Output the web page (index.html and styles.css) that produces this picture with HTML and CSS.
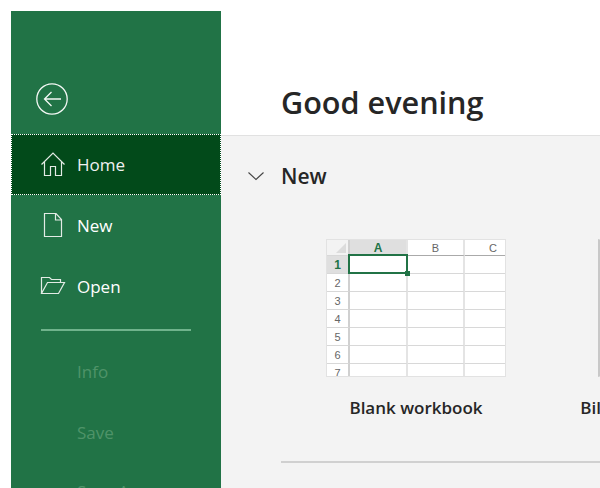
FILE: index.html
```html
<!DOCTYPE html>
<html lang="en">
<head>
  <meta charset="UTF-8">
  <title>Excel - Home</title>
  <meta name="viewport" content="width=device-width, initial-scale=1.0">
  <link rel="stylesheet" href="styles.css">
</head>
<body>

  <nav class="sidebar">
    <div class="back-row">
      <svg class="back-icon" width="34" height="34" viewBox="0 0 34 34" fill="none" stroke="#f4f8f5" stroke-width="1.3">
        <circle cx="17" cy="17" r="15.2"/>
        <path d="M9.5 17H26M16.5 10L9.5 17L16.5 24"/>
      </svg>
    </div>

    <a class="nav-item active">
      <svg class="nav-icon" width="26" height="26" viewBox="0 0 26 26" fill="none" stroke="#e3ebe5" stroke-width="1.2">
        <path d="M1.5 13.5L13 2L24.5 13.5M4.5 11V24.5H10.5V15.5H15.5V24.5H21.5V11"/>
      </svg>
      Home
    </a>
    <a class="nav-item">
      <svg class="nav-icon" width="26" height="26" viewBox="0 0 26 26" fill="none" stroke="#e3ebe5" stroke-width="1.2">
        <path d="M4.5 1.5H16L21.5 7.5V24.5H4.5ZM15.5 1.5V8H21.5"/>
      </svg>
      New
    </a>
    <a class="nav-item">
      <svg class="nav-icon" width="26" height="26" viewBox="0 0 26 26" fill="none" stroke="#e3ebe5" stroke-width="1.2">
        <path d="M1.5 20.5V4.5H9.5L11.5 6.5H20.5V9.5M1.5 20.5H18.5L24.5 9.5H7.5L1.5 20.5Z"/>
      </svg>
      Open
    </a>

    <div class="nav-divider"></div>

    <a class="nav-item disabled">Info</a>
    <a class="nav-item disabled">Save</a>
    <a class="nav-item disabled">Save As</a>
  </nav>

  <main class="content">
    <header class="greeting">
      <h1>Good evening</h1>
    </header>

    <section class="new-section">
      <div class="section-title">
        <svg class="chevron" width="18" height="10" viewBox="0 0 18 10" fill="none" stroke="#444" stroke-width="1.1">
          <path d="M1.5 1.5L9 8.5L16.5 1.5"/>
        </svg>
        <h2>New</h2>
      </div>

      <div class="templates">
        <div class="template">
          <div class="sheet">
            <div class="cell corner"><span class="corner-mark"></span></div>
            <div class="cell col-head selected">A</div>
            <div class="cell col-head">B</div>
            <div class="cell col-head col-c">C</div>

            <div class="cell row-head selected">1</div>
            <div class="cell active-cell"><span class="fill-handle"></span></div>
            <div class="cell"></div>
            <div class="cell"></div>

            <div class="cell row-head">2</div>
            <div class="cell"></div>
            <div class="cell"></div>
            <div class="cell"></div>

            <div class="cell row-head">3</div>
            <div class="cell"></div>
            <div class="cell"></div>
            <div class="cell"></div>

            <div class="cell row-head">4</div>
            <div class="cell"></div>
            <div class="cell"></div>
            <div class="cell"></div>

            <div class="cell row-head">5</div>
            <div class="cell"></div>
            <div class="cell"></div>
            <div class="cell"></div>

            <div class="cell row-head">6</div>
            <div class="cell"></div>
            <div class="cell"></div>
            <div class="cell"></div>

            <div class="cell row-head">7</div>
            <div class="cell"></div>
            <div class="cell"></div>
            <div class="cell"></div>
          </div>
          <p class="template-name">Blank workbook</p>
        </div>

        <div class="template">
          <div class="sheet sheet-next"></div>
          <p class="template-name">Billing Statement Trackers</p>
        </div>
      </div>

      <div class="section-rule"></div>
    </section>
  </main>

</body>
</html>
```

FILE: styles.css
```css
* {
  box-sizing: border-box;
}

html, body {
  height: 488px;
  overflow: hidden;
}

body {
  margin: 0;
  padding: 11px 0 0 11px;
  display: flex;
  background-color: #fff;
  font-family: "Open Sans", sans-serif;
  color: #262626;
}

.sidebar {
  width: 210px;
  flex-shrink: 0;
  height: 477px;
  overflow: hidden;
  background-color: #217346;
}

.back-row {
  height: 123px;
  padding: 71px 0 0 24px;
}

.back-icon {
  display: block;
}

.nav-item {
  display: flex;
  align-items: center;
  height: 61px;
  padding-left: 66px;
  position: relative;
  font-size: 17px;
  color: #fff;
}

.nav-item.active {
  background-color: #024a1a;
  color: #f0f0f0;
  outline: 1px dotted #fff;
  outline-offset: -1px;
}

.nav-icon {
  position: absolute;
  left: 29px;
  top: 17px;
}

.nav-divider {
  height: 2px;
  margin: 12px 30px 10px;
  background-color: #70b38c;
}

.nav-item.disabled {
  color: #4f9369;
}

.nav-item.disabled:last-child {
  margin-top: -2px;
}

.content {
  flex: 1;
  min-width: 0;
  overflow: hidden;
}

.greeting {
  height: 125px;
  padding: 72px 0 0 60px;
  border-bottom: 1px solid #e1e1e1;
}

h1 {
  margin: 0;
  font-size: 30.6px;
  line-height: 38px;
  font-weight: 600;
  color: #262626;
}

.new-section {
  height: 352px;
  background-color: #f3f3f3;
  padding: 0 0 0 60px;
}

.section-title {
  display: flex;
  align-items: center;
  height: 79px;
  position: relative;
}

.chevron {
  position: absolute;
  left: -34px;
  top: 35px;
}

h2 {
  margin: 0;
  font-size: 21px;
  font-weight: 600;
  color: #262626;
}

.templates {
  display: flex;
  gap: 92px;
  padding-left: 45px;
  margin-top: 24px;
}

.template {
  width: 180px;
  flex-shrink: 0;
  display: flex;
  flex-direction: column;
  align-items: center;
}

.sheet {
  width: 180px;
  height: 138px;
  display: grid;
  grid-template-columns: 23px 58px 57px 42px;
  grid-template-rows: 16px repeat(7, 18px);
  overflow: hidden;
  background-color: #fff;
  border: 1px solid #e2e2e2;
  font-family: "Liberation Sans", sans-serif;
  font-size: 11px;
  color: #666;
}

.sheet-next {
  display: block;
  border-left: 2px solid #c8c8c8;
}

.cell {
  position: relative;
  display: flex;
  align-items: center;
  justify-content: center;
  border-right: 2px solid #e4e4e4;
  border-bottom: 1px solid #d8d8d8;
}

.corner {
  background-color: #f3f3f3;
  border-right: 2px solid #d0d0d0;
}

.corner-mark {
  position: absolute;
  right: 2px;
  bottom: 2px;
  border-style: solid;
  border-width: 0 0 10px 10px;
  border-color: transparent transparent #dcdcdc transparent;
}

.col-head {
  border-bottom: 1px solid #aaa;
}

.col-c {
  justify-content: flex-end;
  padding-right: 10px;
  border-right: none;
}

.row-head {
  background-color: #fff;
  border-right: 2px solid #d0d0d0;
}

.selected {
  background-color: #dfdfdf;
  color: #217346;
  font-weight: bold;
  font-size: 12px;
}

.active-cell {
  margin: -2px 0 0 -2px;
  border: 2px solid #217346;
  z-index: 1;
}

.fill-handle {
  position: absolute;
  right: -4px;
  bottom: -4px;
  width: 5px;
  height: 5px;
  background-color: #217346;
}

.template-name {
  margin: 20px 0 0;
  font-size: 17px;
  line-height: 22px;
  font-weight: 600;
  white-space: nowrap;
  color: #262626;
}

.section-rule {
  height: 2px;
  margin-top: 42px;
  background-color: #d0d0d0;
}
```
